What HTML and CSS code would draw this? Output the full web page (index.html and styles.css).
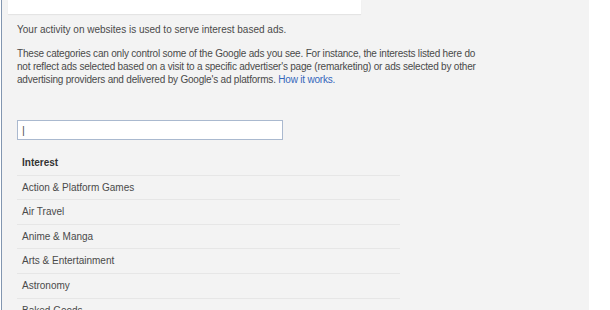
FILE: index.html
```html
<!DOCTYPE html>
<html lang="en">
<head>
  <meta charset="UTF-8">
  <title>Ads Settings - Interests</title>
  <link rel="stylesheet" href="styles.css">
</head>
<body>

  <div class="panel">
    <div class="top-box"></div>

    <div class="content">
      <p class="lead">Your activity on websites is used to serve interest based ads.</p>

      <p class="note">
        These categories can only control some of the Google ads you see. For instance, the interests listed here do
        not reflect ads selected based on a visit to a specific advertiser's page (remarketing) or ads selected by other
        advertising providers and delivered by Google's ad platforms. <a href="#">How it works.</a>
      </p>

      <div class="search">
        <input type="text" class="search-input" value="|" readonly>
      </div>

      <ul class="interests">
        <li class="head">Interest</li>
        <li>Action &amp; Platform Games</li>
        <li>Air Travel</li>
        <li>Anime &amp; Manga</li>
        <li>Arts &amp; Entertainment</li>
        <li>Astronomy</li>
        <li>Baked Goods</li>
      </ul>
    </div>
  </div>

</body>
</html>
```

FILE: styles.css
```css
html, body {
  margin: 0;
  padding: 0;
  background: #fff;
  overflow: hidden;
}
body {
  font-family: "Liberation Sans", Arial, sans-serif;
  font-size: 10px;
  color: #4a4a4a;
}
.panel {
  width: 587px;
  height: 310px;
  margin-left: 1px;
  border-left: 1px solid #8296b0;
  background: #f3f3f3;
}
.top-box {
  width: 353px;
  height: 14px;
  margin-left: 6px;
  background: #fff;
  box-shadow: 0 1px 1px rgba(0,0,0,0.06);
}
.content {
  padding-left: 15px;
}
.lead {
  margin: 9px 0 0;
  line-height: 13px;
}
.note {
  width: 464px;
  margin: 11px 0 0;
  line-height: 13px;
  letter-spacing: -0.2px;
}
.note a {
  color: #3366bb;
  text-decoration: none;
}
.search {
  margin-top: 34px;
}
.search-input {
  box-sizing: border-box;
  width: 266px;
  height: 20px;
  margin: 0;
  padding: 0 0 0 4px;
  border: 1px solid #aab9cf;
  background: #fff;
  font-family: inherit;
  font-size: 11px;
  color: #555;
  outline: none;
}
.interests {
  list-style: none;
  margin: 11px 0 0;
  padding: 0;
  width: 383px;
}
.interests li {
  height: 23.6px;
  line-height: 23.6px;
  padding-left: 5px;
  border-bottom: 1px solid #e6e6e6;
}
.interests .head {
  font-weight: bold;
  color: #333;
}
```
